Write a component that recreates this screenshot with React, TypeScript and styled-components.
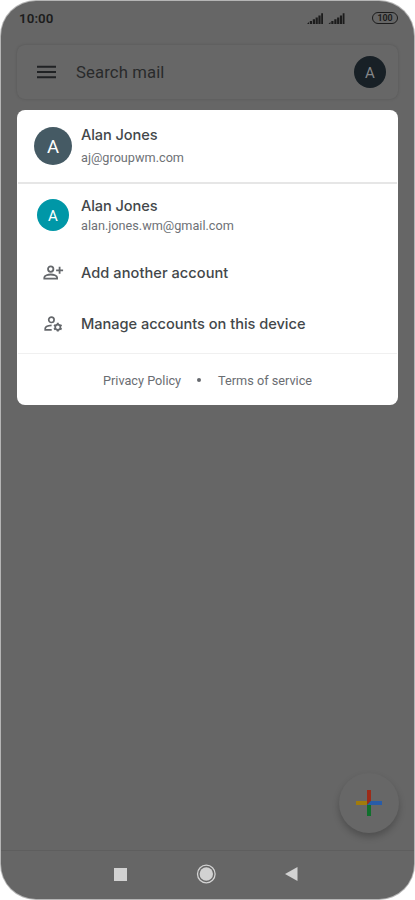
import React from 'react';
import styled, { createGlobalStyle } from 'styled-components';

const GlobalStyle = createGlobalStyle`
  * { box-sizing: border-box; }
  body { margin: 0; background: #fff; font-family: Roboto, "Liberation Sans", sans-serif; }
`;

const Page = styled.div`
  width: 415px;
  height: 900px;
  padding: 1px;
  background: #fff;
`;

const Phone = styled.main`
  width: 413px;
  height: 898px;
  display: flex;
  flex-direction: column;
  background: #666;
  border-radius: 35px;
  overflow: hidden;
  box-shadow: 0 0 0 1px #b5b5b5;
`;

const StatusBar = styled.header`
  height: 44px;
  padding: 6px 16px 0 18px;
  display: flex;
  align-items: flex-start;
  color: #1c1c1c;
`;

const Clock = styled.span`
  flex: 1;
  font-size: 13.3px;
  line-height: 24px;
  font-weight: 600;
  letter-spacing: 0.1px;
`;

const Signals = styled.svg`
  width: 38px;
  height: 12px;
  margin: 6px 27px 0 0;
`;

const Battery = styled.span`
  width: 26px;
  height: 12px;
  margin-top: 5px;
  border: 1px solid #1c1c1c;
  border-radius: 6px;
  font-size: 8.8px;
  font-weight: 700;
  line-height: 11px;
  text-align: center;
`;

const SearchBar = styled.section`
  height: 54px;
  flex: none;
  margin: 0 16px 11px;
  padding: 0 12px 0 20px;
  display: flex;
  align-items: center;
  border-radius: 8px;
  background: #676767;
  box-shadow: 0 0 3px rgba(0, 0, 0, 0.17);
`;

const MenuIcon = styled.svg`
  width: 19px;
  height: 14px;
`;

const SearchText = styled.span`
  flex: 1;
  margin-left: 20px;
  padding-top: 1px;
  color: #292a2b;
  font-size: 16.7px;
  letter-spacing: 0.12px;
`;

const Avatar = styled.span<{ $size: number; $bg: string; $fg?: string; $font: number }>`
  width: ${p => p.$size}px;
  height: ${p => p.$size}px;
  flex: none;
  display: flex;
  align-items: center;
  justify-content: center;
  padding-top: 1px;
  border-radius: 50%;
  background: ${p => p.$bg};
  color: ${p => p.$fg ?? '#fff'};
  font-size: ${p => p.$font}px;
`;

const Card = styled.section`
  width: 381px;
  height: 295px;
  flex: none;
  margin-left: 16px;
  display: flex;
  flex-direction: column;
  border-radius: 8px;
  background: #fff;
  overflow: hidden;
`;

const Account = styled.div<{ $height: number; $top: number }>`
  height: ${p => p.$height}px;
  padding-top: ${p => p.$top}px;
  display: grid;
  grid-template-columns: 64px 1fr;
  align-items: start;
`;

const IconSlot = styled.div<{ $top?: number }>`
  width: 72px;
  margin-top: ${p => p.$top ?? 0}px;
  display: flex;
  justify-content: center;
`;

const Details = styled.div<{ $gap: number }>`
  display: flex;
  flex-direction: column;
  gap: ${p => p.$gap}px;
`;

const Title = styled.span<{ $spacing?: number }>`
  font-family: Inter, sans-serif;
  font-size: 14.6px;
  font-weight: 500;
  line-height: 18px;
  letter-spacing: ${p => p.$spacing ?? 0}px;
  color: #43474a;
  white-space: nowrap;
`;

const Email = styled.span`
  font-size: 12.7px;
  line-height: 16px;
  color: #6e7176;
`;

const Divider = styled.div<{ $size: number; $color: string }>`
  height: ${p => p.$size}px;
  flex: none;
  margin: 0 1px;
  background: ${p => p.$color};
`;

const Action = styled.div<{ $height: number; $bottom?: number }>`
  height: ${p => p.$height}px;
  padding-bottom: ${p => p.$bottom ?? 0}px;
  display: grid;
  grid-template-columns: 64px 1fr;
  align-items: center;
`;

const PersonIcon = styled.svg`
  width: 20px;
  height: 18px;
  overflow: visible;
`;

const Links = styled.footer`
  flex: 1;
  padding: 1px 0 0 86px;
  display: flex;
  align-items: center;
  font-size: 12.7px;
  color: #6a6d72;
`;

const Dot = styled.i`
  width: 4px;
  height: 4px;
  margin: 0 17px 1px 16px;
  border-radius: 50%;
  background: #66696e;
`;

const Inbox = styled.div`
  flex: 1;
  display: flex;
  align-items: flex-end;
  justify-content: flex-end;
  padding: 0 15px 17px;
`;

const Compose = styled.div`
  width: 60px;
  height: 60px;
  display: flex;
  align-items: center;
  justify-content: center;
  padding-right: 1px;
  border-radius: 50%;
  background: #676767;
  box-shadow: 0 4px 7px rgba(0, 0, 0, 0.23);
`;

const NavBar = styled.nav`
  height: 49px;
  flex: none;
  padding: 0 116px 2px 113px;
  display: flex;
  justify-content: space-between;
  align-items: center;
  border-top: 1px solid #5e5e5e;
`;

export default function App() {
  return (
    <Page>
      <GlobalStyle />
      <Phone>
        <StatusBar>
          <Clock>10:00</Clock>
          <Signals viewBox="0 0 38 12" fill="#1c1c1c">
            {[0, 21.5].map(x => (
              <g key={x} transform={`translate(${x} 0)`}>
                <path d="M0 11l2-2v2zM2.8 8h2.2v3H2.8zM5.8 6.3H8V11H5.8zM8.6 4.5h2.2V11H8.6zM11.4 2.5h2.2V11h-2.2zM14.2.3h1.8V11h-1.8z" />
              </g>
            ))}
          </Signals>
          <Battery>100</Battery>
        </StatusBar>

        <SearchBar>
          <MenuIcon viewBox="0 0 19 14" fill="#202224">
            <path d="M0 .8h19v2H0zM0 6h19v2H0zM0 11.2h19v2H0z" />
          </MenuIcon>
          <SearchText>Search mail</SearchText>
          <Avatar $size={32} $bg="#182026" $fg="#858789" $font={15}>A</Avatar>
        </SearchBar>

        <Card>
          <Account $height={72} $top={16}>
            <IconSlot $top={1}><Avatar $size={38} $bg="#455a64" $font={18.5}>A</Avatar></IconSlot>
            <Details $gap={6}>
              <Title $spacing={-0.1}>Alan Jones</Title>
              <Email>aj@groupwm.com</Email>
            </Details>
          </Account>
          <Divider $size={2} $color="#e6e6e6" />
          <Account $height={63} $top={13}>
            <IconSlot $top={2}><Avatar $size={32} $bg="#0097a7" $font={15}>A</Avatar></IconSlot>
            <Details $gap={3}>
              <Title $spacing={-0.1}>Alan Jones</Title>
              <Email>alan.jones.wm@gmail.com</Email>
            </Details>
          </Account>
          <Action $height={52}>
            <IconSlot>
              <PersonIcon viewBox="0 0 20 18" fill="none" stroke="#65686c" strokeWidth="1.8">
                <circle cx="7.7" cy="5.1" r="2.7" />
                <path d="M1.3 14.6v-1.2c0-1.8 3.7-2.9 6.4-2.9s6.4 1.1 6.4 2.9v1.2zM16.6 2.8v7M13.1 6.3h7" />
              </PersonIcon>
            </IconSlot>
            <Title $spacing={0.05}>Add another account</Title>
          </Action>
          <Action $height={54} $bottom={4}>
            <IconSlot>
              <PersonIcon viewBox="0 0 20 18" fill="none" stroke="#65686c" strokeWidth="1.7">
                <circle cx="8.4" cy="4.8" r="2.7" />
                <path d="M8.7 14.8H2.2v-1.2c0-1.8 3.2-3 6.4-3.2" />
                <circle cx="14.8" cy="12.2" r="2.6" />
                <path strokeWidth="2" d="M14.8 7.8v1.6M14.8 15v1.6M11 10l1.4.8M17.2 13.6l1.4.8M11 14.4l1.4-.8M17.2 10.8l1.4-.8" />
              </PersonIcon>
            </IconSlot>
            <Title $spacing={-0.03}>Manage accounts on this device</Title>
          </Action>
          <Divider $size={1} $color="#f0f0f0" />
          <Links>
            <span>Privacy Policy</span>
            <Dot />
            <span>Terms of service</span>
          </Links>
        </Card>

        <Inbox>
          <Compose>
            <svg width="26" height="26" viewBox="0 0 26 26">
              <path fill="#9c2b18" d="M11 0h4v11l-4 4z" />
              <path fill="#a17b0c" d="M0 11h11v4H0z" />
              <path fill="#10702c" d="M11 15l4-4v15h-4z" />
              <path fill="#285ca8" d="M15 11h11v4H11z" />
            </svg>
          </Compose>
        </Inbox>

        <NavBar>
          <svg width="13" height="13" viewBox="0 0 13 13"><path fill="#d2d2d2" d="M0 0h13v13H0z" /></svg>
          <svg width="20" height="20" viewBox="0 0 20 20">
            <circle cx="10.3" cy="10" r="8.8" fill="none" stroke="#d2d2d2" strokeWidth="1.3" />
            <circle cx="10.3" cy="10" r="6.7" fill="#d2d2d2" />
          </svg>
          <svg width="13" height="14" viewBox="0 0 13 14"><path fill="#d2d2d2" d="M0 7L12.5 0v14z" /></svg>
        </NavBar>
      </Phone>
    </Page>
  );
}
